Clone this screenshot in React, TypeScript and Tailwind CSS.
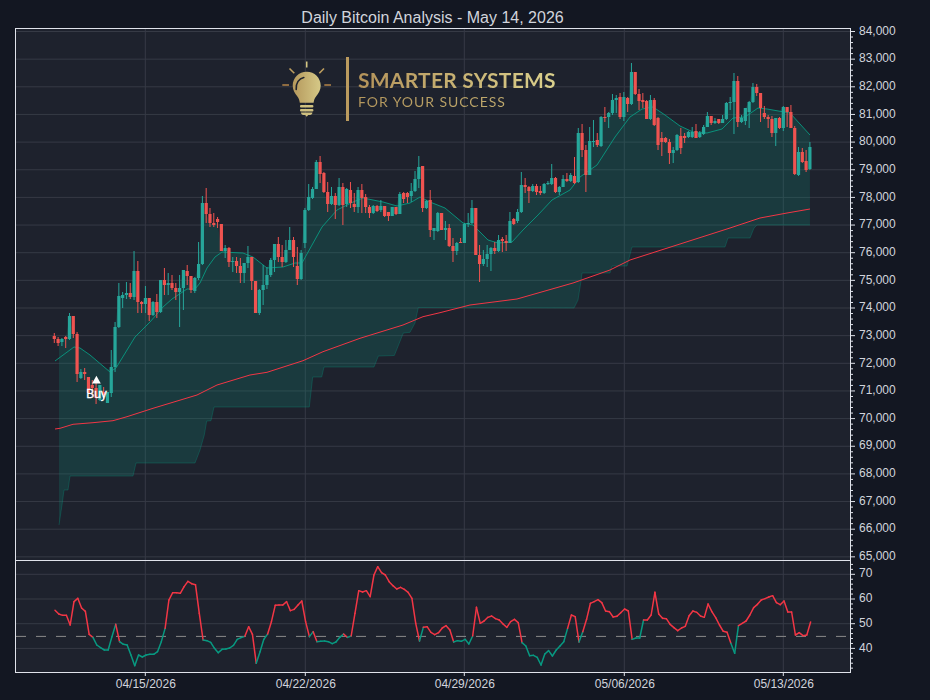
import React from 'react';

// 4h candles, in screen y: [high, bodyTop, bodyBottom, low, up]
const CANDLES: number[][] = [
  [333,336,339,343,0],[337,339,343,346,0],[338,339,342,346,1],[336,337,339,348,0],[313,316,339,340,1],
  [316,316,334,338,0],[332,334,374,382,0],[369,372,378,379,1],[368,372,374,380,0],[377,377,393,393,0],
  [380,385,388,396,0],[383,388,398,404,0],[385,385,400,401,1],[387,392,395,400,0],[392,392,403,403,1],
  [350,367,393,397,1],[322,327,367,372,1],[283,296,327,328,1],[292,295,298,308,1],[282,293,295,299,1],
  [283,293,297,299,0],[251,271,297,300,1],[261,271,302,313,0],[301,302,304,313,0],[286,298,304,313,1],
  [298,298,315,321,0],[301,302,315,316,1],[294,302,312,318,0],[280,280,312,313,1],[268,280,285,295,0],
  [273,283,285,295,1],[275,283,288,290,0],[283,288,292,300,0],[275,288,292,327,1],[270,270,288,310,1],
  [265,271,276,285,0],[276,276,290,293,0],[277,278,291,293,1],[242,264,278,280,1],[196,203,264,265,1],
  [188,203,214,223,0],[208,214,223,227,0],[213,223,225,227,0],[217,219,222,228,0],[224,224,251,251,0],
  [245,248,251,258,1],[247,248,262,267,0],[257,261,262,272,1],[257,261,266,273,0],[258,266,273,283,0],
  [263,263,273,283,1],[246,257,263,268,1],[257,257,281,290,0],[281,281,313,313,0],[289,290,313,315,1],
  [265,285,290,305,1],[267,275,285,289,1],[258,260,275,277,1],[244,244,260,272,1],[237,244,257,262,0],
  [245,257,262,267,0],[240,250,262,263,1],[227,240,250,250,1],[237,240,257,267,0],[247,266,279,285,0],
  [250,253,279,280,1],[208,210,243,248,1],[184,197,210,211,1],[187,189,198,199,1],[160,162,189,189,1],
  [156,162,174,183,0],[172,173,192,193,0],[182,192,204,212,0],[187,196,204,205,1],[193,196,205,219,0],
  [178,187,205,206,1],[183,187,205,225,0],[188,189,204,207,1],[182,190,203,208,0],[193,204,207,212,0],
  [187,190,207,213,1],[184,190,198,213,0],[194,197,207,213,0],[205,207,213,218,0],[205,206,213,214,1],
  [205,206,211,212,0],[200,206,210,212,1],[206,206,216,217,0],[212,212,216,221,0],[207,207,216,216,1],
  [207,207,214,215,0],[192,194,214,214,1],[192,193,199,203,0],[192,193,197,203,0],[183,191,196,202,1],
  [171,179,191,192,1],[156,167,179,188,1],[166,166,208,212,0],[200,201,208,209,1],[190,200,230,237,0],
  [228,228,231,240,1],[212,213,231,232,1],[213,213,230,230,0],[221,228,230,240,1],[224,228,246,247,0],
  [238,246,251,262,0],[242,243,251,255,1],[238,242,243,243,0],[223,224,243,243,1],[213,223,224,227,1],
  [200,208,223,224,1],[208,208,255,255,0],[245,255,264,282,0],[250,259,264,266,1],[245,254,259,267,1],
  [247,248,254,271,1],[242,248,251,254,0],[235,240,251,252,1],[237,239,241,252,0],[235,241,243,251,0],
  [212,221,243,243,1],[218,219,224,225,0],[209,212,221,223,1],[172,185,212,213,1],[178,185,187,193,0],
  [186,187,191,203,0],[184,186,191,192,1],[184,186,192,195,0],[186,191,193,195,0],[183,184,193,194,1],
  [181,183,184,185,1],[164,178,184,185,1],[177,178,192,193,0],[186,187,192,195,1],[175,179,187,187,1],
  [173,179,181,182,0],[173,175,181,182,1],[157,176,183,184,0],[128,133,182,183,1],[124,133,150,157,0],
  [145,150,175,192,0],[127,141,175,175,1],[120,141,142,147,1],[133,140,145,147,0],[116,117,146,147,1],
  [107,117,118,122,0],[112,113,117,128,1],[94,100,113,115,1],[95,98,100,113,1],[93,97,117,119,0],
  [92,97,117,121,1],[97,98,104,112,0],[63,72,104,105,1],[72,72,94,95,0],[89,94,101,110,0],
  [93,100,102,108,0],[100,101,119,119,0],[95,100,119,120,1],[98,100,125,126,0],[117,118,145,150,0],
  [132,138,142,156,0],[137,138,142,143,0],[139,142,153,164,0],[147,150,153,163,1],[134,135,150,151,1],
  [128,136,148,154,0],[133,136,138,143,0],[131,132,137,138,1],[127,132,137,138,1],[124,131,138,138,0],
  [131,133,137,138,1],[125,127,134,135,1],[112,116,127,127,1],[116,116,123,125,0],[118,121,123,124,1],
  [119,119,123,124,0],[115,119,123,123,1],[102,103,119,120,1],[97,102,103,110,1],[73,81,102,134,1],
  [76,81,122,127,0],[115,118,122,123,1],[108,108,121,125,1],[101,102,112,128,1],[83,87,102,103,1],
  [84,87,93,96,0],[93,93,108,122,0],[106,113,117,119,0],[115,117,119,128,0],[116,119,133,137,0],
  [118,118,133,146,1],[117,118,128,129,0],[106,107,128,131,1],[107,107,112,127,0],[105,112,128,128,0],
  [126,128,174,175,0],[147,152,175,176,1],[148,152,162,163,0],[150,161,170,172,0],[142,147,169,170,1],
];

// RSI y values, measured at 3x from y=540
const RSI = [
  211,222,226,226,255,185,175,204,214,283,292,315,323,330,330,290,253,305,313,315,
  345,377,345,351,345,343,343,335,305,265,180,158,158,160,140,124,131,134,220,300,
  302,307,325,338,328,327,324,316,298,293,289,260,283,370,335,298,282,245,196,195,
  195,185,212,208,195,183,245,290,275,305,304,303,305,311,306,292,282,292,288,220,
  152,156,152,170,105,80,98,105,125,137,147,142,148,157,175,250,303,262,260,277,
  284,278,264,257,270,306,302,304,298,312,288,202,250,243,232,228,236,240,252,262,
  245,238,248,308,318,347,346,352,375,342,332,348,330,318,305,265,225,230,306,275,
  238,190,185,179,188,213,215,231,229,218,207,213,298,294,294,240,240,225,157,222,
  235,236,253,263,272,264,259,227,213,217,228,232,192,215,233,255,274,277,310,340,
  257,250,243,225,203,193,180,176,171,167,188,194,183,216,216,285,278,287,285,246,
];
const RSI_MID = 289;

const MA: number[][] = [
  [55,361],[74,347],[80,348],[90,355],[110,372],[116,368],[135,337],[142,330],[150,322],[163,307],
  [172,299],[187,289],[195,289],[200,283],[207,268],[215,257],[222,252],[243,253],[253,257],[267,268],
  [283,267],[295,263],[302,263],[312,245],[322,227],[337,210],[353,202],[363,198],[383,202],[397,206],
  [410,203],[420,197],[430,202],[445,208],[463,223],[473,225],[488,240],[498,243],[512,242],[523,230],
  [538,215],[552,200],[570,190],[580,177],[597,165],[615,137],[630,117],[642,109],[653,107],[665,115],
  [680,126],[693,132],[707,133],[722,129],[733,118],[745,117],[758,108],[767,109],[790,113],[810,135],
];

const SLOW_MA: number[][] = [
  [55,429],[60,428.3],[73,424.3],[93,422.7],[113,420.7],[127,416.7],[153,408.3],[197,395],[217,385],[250,375],
  [267,372.3],[303,360.7],[323,351.7],[360,338.3],[403,325],[423,316.7],[440,312.7],[470,305],[517,299],[573,283],
  [610,270],[630,260],[680,244],[730,228],[760,218],[787,213],[810,209],
];

const BAND: number[][] = [
  [59,525],[62,505],[64,490],[68,490],[70,476],[133,476],[136,463],[195,463],[200,450],[204.3,435],
  [206.7,421],[211,420.7],[214,407],[309.3,407],[312.7,377],[321.7,377],[324,367],[374,367],[378.3,356],[394.3,355.5],
  [403.3,333],[410,332.3],[415,323],[418.3,307.5],[574,308],[578,300],[581,281],[582,273],[610,273],[612,266],
  [627,266],[632,247],[725,247],[728,238],[750,238],[754,228],[757,225],[810,225],
];

const PRICE_TOP = 31.5;
const PRICE_STEP = 27.65;
const RSI_TOP = 574.3;
const RSI_STEP = 24.7;
const DATES: [number, string][] = [
  [145.3, '04/15/2026'],
  [305.3, '04/22/2026'],
  [464.3, '04/29/2026'],
  [624.3, '05/06/2026'],
  [783.3, '05/13/2026'],
];

const candleX = (i: number) => 54.3 + 3.797 * i;
const rsiX = (i: number) => 55 + 3.797 * i;
const toPoints = (pts: number[][]) => pts.map((p) => p.join(',')).join(' ');

const maAt = (x: number) => {
  for (let i = 1; i < MA.length; i++) {
    if (x <= MA[i][0]) {
      const [x0, y0] = MA[i - 1];
      const [x1, y1] = MA[i];
      return y0 + ((y1 - y0) * (x - x0)) / (x1 - x0);
    }
  }
  return MA[MA.length - 1][1];
};

// top of the cloud is the higher of close and MA
const cloudTop = CANDLES.map((c, i) => [candleX(i), Math.min(c[4] ? c[1] : c[2], maAt(candleX(i)))]).filter((p) => p[0] >= 59);
const cloud = [[59, cloudTop[0][1]], ...cloudTop, ...[...BAND].reverse()];

const prices = Array.from({ length: 20 }, (_, i) => 84000 - i * 1000);
const rsiLevels = [70, 60, 50, 40];

const Logo = () => (
  <div className="absolute left-[282px] top-[29px] flex items-center">
    <svg width="50" height="56" viewBox="282 61 50 56">
      <defs>
        <linearGradient id="gold" x1="0" y1="0" x2="1" y2="0">
          <stop offset="0" stopColor="#b4985c" />
          <stop offset="1" stopColor="#d6c987" />
        </linearGradient>
      </defs>
      <g stroke="#bf9f5f" strokeWidth="1.6">
        <line x1="306.7" y1="61.5" x2="306.7" y2="67.5" stroke="#d3c683" />
        <line x1="289.5" y1="68.5" x2="294.3" y2="73.3" />
        <line x1="324" y1="68.5" x2="319.3" y2="73.3" />
        <line x1="282.3" y1="85" x2="289" y2="85" stroke="#ab7f45" />
        <line x1="324.3" y1="85" x2="331" y2="85" stroke="#ab7f45" />
      </g>
      <path d="M306.7 71.7c-7.8 0-14 6.2-14 13.8 0 4.6 2.2 7.9 4.5 10.7 1.6 2 2.3 4 2.6 6.6h13.8c.3-2.6 1-4.6 2.6-6.6 2.3-2.8 4.5-6.1 4.5-10.7 0-7.6-6.2-13.8-13.9-13.8z" fill="url(#gold)" />
      <path d="M296.2 89.5c-.6-6.4 2.9-11.2 7.6-12" fill="none" stroke="#1e222d" strokeWidth="1.6" strokeLinecap="round" />
      <rect x="300" y="105" width="13.4" height="2.4" rx="1" fill="#cfc07f" />
      <rect x="300" y="109" width="13.4" height="2.4" rx="1" fill="#cfc07f" />
      <path d="M301 112.6h11.4c0 1.4-1 2.3-2.4 2.4l-1.8.1-1.5 1.6-1.5-1.6-1.8-.1c-1.4-.1-2.4-1-2.4-2.4z" fill="#cfc07f" />
    </svg>
    <div className="ml-[14px] h-[64px] w-[3px] bg-[#bb9b5e]" />
    <div className="ml-[9px] flex flex-col font-['Lato',sans-serif] whitespace-nowrap">
      <div className="bg-gradient-to-r from-[#b4935a] to-[#dbd18d] bg-clip-text text-[21px] font-bold leading-[24px] tracking-[0.25px] text-transparent">SMARTER SYSTEMS</div>
      <div className="mt-[2px] bg-gradient-to-r from-[#b4975d] to-[#c4b173] bg-clip-text text-[14px] leading-[16px] tracking-[0.95px] text-transparent">FOR YOUR SUCCESS</div>
    </div>
  </div>
);

const Chart = () => (
  <svg width="930" height="672" viewBox="0 28 930 672" className="block overflow-visible" fontSize="12" fill="#d1d4dc">
    <rect x="15.5" y="28.5" width="835" height="644" fill="#1e222d" />

    {/* grid */}
    <g stroke="#363a45" strokeWidth="1">
      {prices.map((_, i) => (
        <line key={i} x1="16" x2="850" y1={PRICE_TOP + i * PRICE_STEP} y2={PRICE_TOP + i * PRICE_STEP} />
      ))}
      {rsiLevels.map((_, i) => (
        <line key={i} x1="16" x2="850" y1={RSI_TOP + i * RSI_STEP} y2={RSI_TOP + i * RSI_STEP} />
      ))}
      {DATES.map(([x]) => (
        <line key={x} x1={x} x2={x} y1="29" y2="672" />
      ))}
    </g>

    {/* cloud and moving averages */}
    <polygon points={toPoints(cloud)} fill="#089981" fillOpacity="0.2" />
    <polyline points={toPoints(BAND)} fill="none" stroke="#089981" strokeOpacity="0.3" />
    <polyline points={toPoints(MA)} fill="none" stroke="#089981" strokeOpacity="0.9" />
    <polyline points={toPoints(SLOW_MA)} fill="none" stroke="#f23645" />

    {/* candles */}
    {CANDLES.map(([h, t, b, l, up], i) => {
      const x = candleX(i);
      const color = up ? '#26a69a' : '#ef5350';
      return (
        <g key={i} fill={color}>
          <rect x={x - 0.5} y={h} width="1" height={l - h} />
          <rect x={x - 1.6} y={t} width="3.2" height={Math.max(b - t, 1)} />
        </g>
      );
    })}

    {/* buy marker */}
    <polygon points="96.4,375.7 100.8,383.5 92,383.5" fill="#ffffff" />
    <text x="96.5" y="398" textAnchor="middle" fill="#ffffff" stroke="#ffffff" strokeWidth="0.3">Buy</text>

    {/* rsi */}
    <line x1="16" x2="850" y1="636.4" y2="636.4" stroke="#8a8a8a" strokeDasharray="10 10" />
    {RSI.slice(1).map((z, i) => (
      <line
        key={i}
        x1={rsiX(i)}
        y1={540 + RSI[i] / 3}
        x2={rsiX(i + 1)}
        y2={540 + z / 3}
        stroke={RSI[i] <= RSI_MID ? '#f23645' : '#089981'}
        strokeWidth="1.5"
        strokeLinecap="round"
      />
    ))}

    {/* frame */}
    <g stroke="#e0e3eb" strokeWidth="1" fill="none">
      <rect x="15.5" y="28.5" width="835" height="644" />
      <line x1="15" x2="851" y1="560.5" y2="560.5" />
    </g>

    {/* price scale */}
    <g stroke="#e0e3eb">
      {Array.from({ length: 96 }, (_, i) => PRICE_TOP + i * (PRICE_STEP / 5)).map((y, i) => (
        <line key={i} x1="851" x2={i % 5 === 0 ? 855 : 853} y1={y} y2={y} />
      ))}
      {Array.from({ length: 22 }, (_, i) => RSI_TOP - 9.88 + i * (RSI_STEP / 5)).map((y, i) => (
        <line key={i} x1="851" x2={(i - 2) % 5 === 0 ? 855 : 853} y1={y} y2={y} />
      ))}
      {DATES.map(([x]) => (
        <line key={x} x1={x} x2={x} y1="673" y2="676" />
      ))}
    </g>
    {prices.map((p, i) => (
      <text key={p} x="859" y={PRICE_TOP + i * PRICE_STEP + 3.2}>{p.toLocaleString('en-US')}</text>
    ))}
    {rsiLevels.map((v, i) => (
      <text key={v} x="859" y={RSI_TOP + i * (RSI_STEP + 0.1) + 3}>{v}</text>
    ))}
    {DATES.map(([x, label]) => (
      <text key={label} x={x + 0.5} y="688" textAnchor="middle">{label}</text>
    ))}
  </svg>
);

export default function App() {
  return (
    <div className="flex h-[700px] w-[930px] flex-col overflow-hidden bg-[#131722] font-['Liberation_Sans',Arial,sans-serif] text-[#d1d4dc]">
      <div className="flex h-[28px] w-[865px] items-center justify-center pt-[7px] text-[16px]">
        Daily Bitcoin Analysis - May 14, 2026
      </div>
      <div className="relative">
        <Chart />
        <Logo />
      </div>
    </div>
  );
}
